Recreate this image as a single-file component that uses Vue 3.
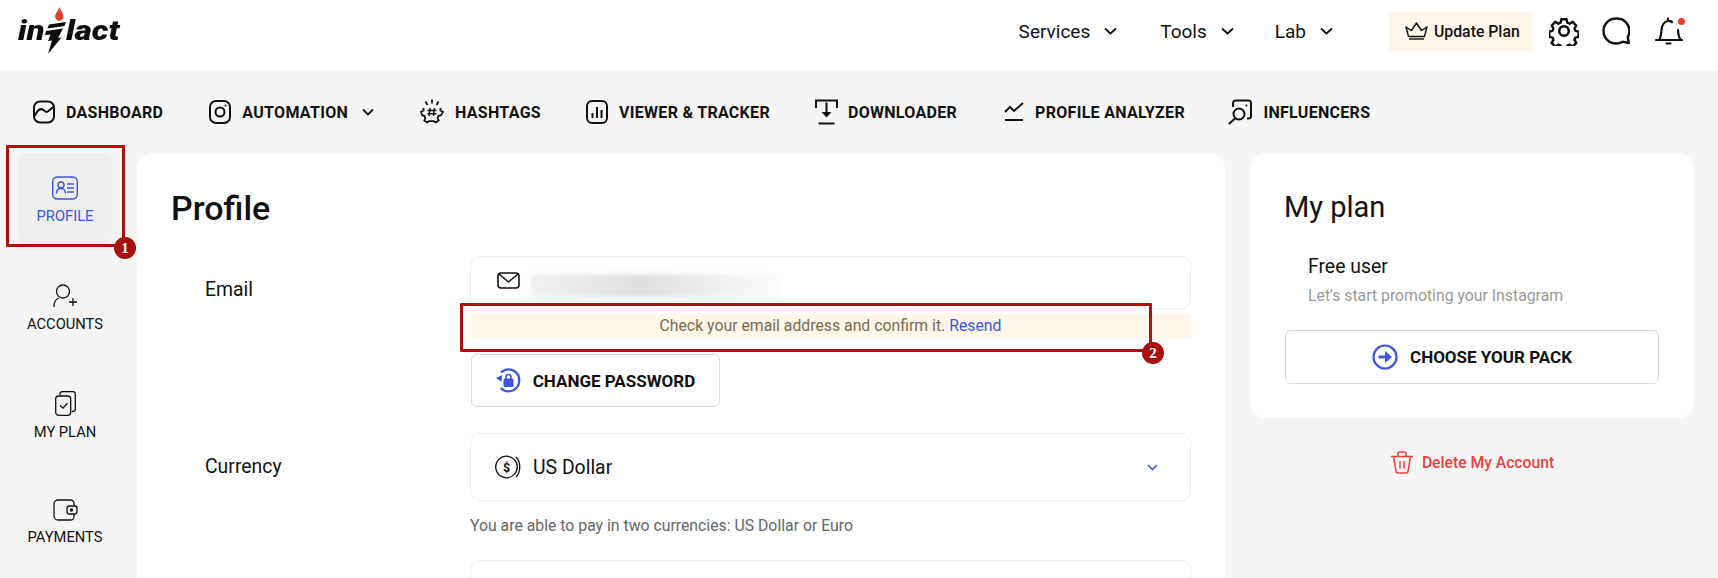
<script setup>
const navItems = [
  { key: 'dash', label: 'DASHBOARD' },
  { key: 'auto', label: 'AUTOMATION', caret: true },
  { key: 'hash', label: 'HASHTAGS' },
  { key: 'view', label: 'VIEWER & TRACKER' },
  { key: 'down', label: 'DOWNLOADER' },
  { key: 'anal', label: 'PROFILE ANALYZER' },
  { key: 'infl', label: 'INFLUENCERS' },
]
const sideItems = [
  { key: 'profile', label: 'PROFILE', active: true },
  { key: 'accounts', label: 'ACCOUNTS' },
  { key: 'plan', label: 'MY PLAN' },
  { key: 'pay', label: 'PAYMENTS' },
]
const topLinks = ['Services', 'Tools', 'Lab']
</script>

<template>
  <div class="page">
    <header class="top">
      <div class="logo">
        <span class="logo-txt lt-in">in</span>
        <svg class="logo-bolt" width="22" height="48" viewBox="0 0 22 48">
          <path d="M14.500 0c1.500 4 4 6.500 4 9.500a4.200 4.200 0 0 1-8.400 0C10.100 6.500 13 4 14.500 0z" fill="#e8412a" />
          <path d="M4 17.500L21 15l-1.500 4L2.500 21.500zM1 24l17-2.500-5 9.500 3.500-.5L3 47l4-13.500-4 .5 2.500-6.500L0 28z" fill="#0d0d0d" />
        </svg>
        <span class="logo-txt lt-lact">lact</span>
      </div>
      <div class="top-right">
        <a v-for="link in topLinks" :key="link" class="top-link">
          {{ link }}
          <svg width="13" height="8" viewBox="0 0 13 8"><path d="M1 1.500l5.500 5 5.500-5" fill="none" stroke="#111" stroke-width="1.800" /></svg>
        </a>
        <button class="update">
          <svg width="23" height="18" viewBox="0 0 23 18" fill="none" stroke="#111" stroke-width="1.400" stroke-linejoin="round">
            <path d="M3.500 14.500L1 5l5.500 3.500L11.500 1l5 7.500L22 5l-2.500 9.500z" /><path d="M4 17h15" />
          </svg>
          Update Plan
        </button>
        <svg class="t-gear" width="30" height="30" viewBox="0 0 30 30" fill="none" stroke="#111" stroke-width="2.600" stroke-linejoin="round">
          <path d="M12.200 2.500h5.600l.8 3.600 2.600 1.100 3.200-2 3.900 4-2 3.100 1 2.600 3.400.8v5.600l-3.400.8-1 2.600 2 3.100-3.900 4-3.200-2-2.600 1.100-.8 3.600h-5.600l-.8-3.600-2.600-1.100-3.200 2-3.900-4 2-3.100-1-2.600-3.400-.8v-5.600l3.400-.8 1-2.600-2-3.100 3.900-4 3.200 2 2.600-1.100z" transform="translate(1 1) scale(.93)" />
          <circle cx="15" cy="15" r="4.800" />
        </svg>
        <svg class="t-chat" width="28" height="28" viewBox="0 0 28 28" fill="none" stroke="#111" stroke-width="2.400" stroke-linejoin="round">
          <path d="M14 1.500a12.500 12.500 0 1 0 0 25c2.500 0 5-.7 6.800-1.800l6 1.300-1-6A12.500 12.500 0 0 0 14 1.500z" />
        </svg>
        <div class="t-bell">
          <svg width="28" height="30" viewBox="0 0 28 30" fill="none" stroke="#111" stroke-width="2.200" stroke-linecap="round">
            <path d="M1 24h26M4 24c2-2 2-6 2.500-10C7 9 9 5.500 13 5c1.500-.2 2.800.2 4 1M23 14c.2 4 .8 8 3 10M13 5V2.500M11.500 27.500h4" />
          </svg>
          <i class="dot"></i>
        </div>
      </div>
    </header>

    <nav class="nav">
      <a v-for="n in navItems" :key="n.key" class="nav-item" :class="'ni-' + n.key">
        <svg v-if="n.key === 'dash'" width="22" height="24" viewBox="0 0 22 24" fill="none" stroke="#111" stroke-width="2">
          <rect x="1" y="1.500" width="20" height="21" rx="6" /><path d="M1.500 16c3-5 5-8 8-6.500s3 4 6 1.500c2-1.500 3-3 5-4" />
        </svg>
        <svg v-else-if="n.key === 'auto'" width="22" height="24" viewBox="0 0 22 24" fill="none" stroke="#111" stroke-width="2">
          <rect x="1" y="1" width="20" height="22" rx="6" /><circle cx="11" cy="12" r="4.500" /><circle cx="16.500" cy="5.500" r="1" fill="#111" stroke="none" />
        </svg>
        <svg v-else-if="n.key === 'hash'" width="24" height="26" viewBox="0 0 24 26" fill="none" stroke="#111" stroke-width="1.800">
          <path d="M12 .5v4M5.500 2.500l2 3.500M18.500 2.500l-2 3.500" />
          <path d="M3.500 9v2.500L1 13l1.200 3.500 2.300.3.800 2.500-1 2.200 2.800 2 2-1.300h4.800l2 1.300 2.800-2-1-2.200.8-2.500 2.300-.3L23 13l-2.500-1.500V9" />
          <path d="M10 9l-1 8M14.500 9l-1 8M7.500 11.500h9M7.500 14.700h9" stroke-width="1.500" />
        </svg>
        <svg v-else-if="n.key === 'view'" width="22" height="24" viewBox="0 0 22 24" fill="none" stroke="#111" stroke-width="2">
          <rect x="1" y="1" width="20" height="22" rx="5" /><path d="M6.500 18v-5M11 18V7M15.500 18v-8" />
        </svg>
        <svg v-else-if="n.key === 'down'" width="23" height="26" viewBox="0 0 23 26" fill="none" stroke="#111" stroke-width="2">
          <path d="M1 9V1.500h21V9" /><path d="M11.500 3.500V14" /><path d="M6.500 13h10l-5 5.500z" fill="#111" stroke="none" /><path d="M3.500 24.500h16" />
        </svg>
        <svg v-else-if="n.key === 'anal'" width="20" height="20" viewBox="0 0 20 20" fill="none" stroke="#111" stroke-width="2">
          <path d="M1 10l5-5 4 4 9-8" /><path d="M1 18h18" />
        </svg>
        <svg v-else width="24" height="26" viewBox="0 0 24 26" fill="none" stroke="#111" stroke-width="2">
          <path d="M5 8V4a2.500 2.500 0 0 1 2.500-2.500h13A2.500 2.500 0 0 1 23 4v13a2.500 2.500 0 0 1-2.500 2.500H19" />
          <circle cx="11" cy="15" r="5.500" /><path d="M7 19.500l-5.500 5" stroke-linecap="round" /><circle cx="18.500" cy="6.500" r="1" fill="#111" stroke="none" />
        </svg>
        <span class="nav-label">{{ n.label }}</span>
        <svg v-if="n.caret" class="caret" width="12" height="8" viewBox="0 0 12 8"><path d="M1 1.500l5 5 5-5" fill="none" stroke="#111" stroke-width="1.800" /></svg>
      </a>
    </nav>

    <div class="body">
      <aside class="side">
        <a v-for="s in sideItems" :key="s.key" class="side-item" :class="{ active: s.active }">
          <svg v-if="s.key === 'profile'" width="26" height="24" viewBox="0 0 26 24" fill="none" stroke="#3a56e0" stroke-width="1.400">
            <rect x=".7" y="1" width="24.600" height="22" rx="4.500" />
            <circle cx="9" cy="9" r="3" /><path d="M4.500 17.500c0-3 1.500-5 4.500-5s4.500 2 4.500 5M15 8h7M15 12h7M15 16h7" />
          </svg>
          <svg v-else-if="s.key === 'accounts'" width="24" height="24" viewBox="0 0 24 24" fill="none" stroke="#111" stroke-width="1.300">
            <circle cx="10" cy="7.500" r="6.500" /><path d="M1 23c0-5 2-8 5-9M20 14v8M16 18h8" />
          </svg>
          <svg v-else-if="s.key === 'plan'" width="21" height="25" viewBox="0 0 21 25" fill="none" stroke="#111" stroke-width="1.300">
            <rect x=".7" y="5" width="15" height="19.300" rx="3" /><path d="M5 4.500V3a2.500 2.500 0 0 1 2.500-2.500H18A2.500 2.500 0 0 1 20.300 3v15a2.500 2.500 0 0 1-2.500 2.500h-1" /><path d="M5 14.500l3 2.700 4.500-5" />
          </svg>
          <svg v-else width="25" height="22" viewBox="0 0 25 22" fill="none" stroke="#111" stroke-width="1.300">
            <path d="M21 7V4.500A3.500 3.500 0 0 0 17.500 1H5A4 4 0 0 0 1 5v12a4 4 0 0 0 4 4h12.500a3.500 3.500 0 0 0 3.500-3.500V15" />
            <rect x="14" y="7" width="10" height="8" rx="2.500" /><circle cx="18.500" cy="11" r="1" fill="#111" />
          </svg>
          <span class="side-label">{{ s.label }}</span>
        </a>
      </aside>

      <main class="main card">
        <h1 class="title">Profile</h1>
        <section class="row row-email">
          <label class="lbl">Email</label>
          <div class="fields">
            <div class="input email">
              <svg width="23" height="17" viewBox="0 0 23 17" fill="none" stroke="#111" stroke-width="1.600" stroke-linejoin="round">
                <rect x="1" y="1" width="21" height="15" rx="3" /><path d="M2 2l9.500 8L21 2" />
              </svg>
              <span class="blur"></span>
            </div>
            <div class="notice">Check your email address and confirm it. <a>Resend</a></div>
            <button class="btn pw">
              <svg width="25" height="25" viewBox="0 0 25 25" fill="none">
                <path d="M5 4.500A10.800 10.800 0 0 1 23.300 12.500a10.800 10.800 0 0 1-18.500 7.500" stroke="#3a56e0" stroke-width="2.200" />
                <path d="M0 9.500L6.500 7.500 5 14z" fill="#3a56e0" transform="rotate(-8 3 10)" />
                <rect x="7.500" y="10.500" width="10" height="8.500" rx="1.500" fill="#3a56e0" />
                <path d="M10 11V9a2.500 2.500 0 0 1 5 0v2" stroke="#3a56e0" stroke-width="1.600" />
              </svg>
              CHANGE PASSWORD
            </button>
          </div>
        </section>
        <section class="row row-cur">
          <label class="lbl">Currency</label>
          <div class="fields">
            <div class="input select">
              <svg width="28" height="24" viewBox="0 0 28 24" fill="none" stroke="#111" stroke-width="1.300">
                <circle cx="11.500" cy="12" r="10.800" /><path d="M21 2c5 5 5 15 0 20" />
                <text x="11.500" y="16.500" text-anchor="middle" font-size="12.500" font-weight="700" fill="#111" stroke="none" font-family="Roboto, sans-serif">$</text>
              </svg>
              <span class="sel-val">US Dollar</span>
              <svg class="sel-caret" width="11" height="7" viewBox="0 0 11 7"><path d="M1 1l4.500 4.500L10 1" fill="none" stroke="#3a56e0" stroke-width="1.600" /></svg>
            </div>
            <p class="help">You are able to pay in two currencies: US Dollar or Euro</p>
            <div class="input next"></div>
          </div>
        </section>
      </main>

      <aside class="right">
        <div class="card plan">
          <h2 class="plan-title">My plan</h2>
          <div class="plan-name">Free user</div>
          <div class="plan-sub">Let's start promoting your Instagram</div>
          <button class="btn pack">
            <svg width="26" height="26" viewBox="0 0 26 26" fill="none">
              <circle cx="13" cy="13" r="11.500" stroke="#3a56e0" stroke-width="2.200" />
              <path d="M6.500 11.500H13V7l7 6-7 6v-4.500H6.500z" fill="#3a56e0" />
            </svg>
            CHOOSE YOUR PACK
          </button>
        </div>
        <a class="del">
          <svg width="24" height="23" viewBox="0 0 24 23" fill="none" stroke="#f03e3e" stroke-width="1.500" stroke-linejoin="round">
            <path d="M1 5.500h22M3.500 5.500L6 20a2 2 0 0 0 2 2h8a2 2 0 0 0 2-2l2.500-14.500M8 5.500V3a2 2 0 0 1 2-2h4a2 2 0 0 1 2 2v2.500M10 10v7.500M14 10v7.500" />
          </svg>
          Delete My Account
        </a>
      </aside>
    </div>

    <div class="mark mark-1"><i class="badge">1</i></div>
    <div class="mark mark-2"><i class="badge">2</i></div>
  </div>
</template>

<style>
html, body { margin: 0; background: #f5f5f5; }
</style>

<style scoped>
.page { position: relative; width: 1718px; height: 578px; overflow: hidden; background: #f5f5f5; font-family: Roboto, sans-serif; color: #111; }
a { color: inherit; text-decoration: none; }
.top { height: 71px; background: #fff; display: flex; align-items: center; justify-content: space-between; padding: 0 35px 9px 18px; box-sizing: border-box; }
.logo { display: flex; align-items: center; height: 48px; width: 105px; color: #0d0d0d; }
.logo-txt { font-weight: 900; font-style: italic; font-size: 28px; line-height: 1; transform-origin: left center; display: inline-block; }
.lt-in { width: 27px; transform: scaleX(1.16); }
.lt-lact { width: 58px; transform: scaleX(1.18); margin-left: -1px; }
.logo-bolt { flex: none; margin: 0; }
.top-right { display: flex; align-items: center; }
.top-link { display: flex; align-items: center; gap: 14px; font-size: 19px; margin-right: 41px; }
.top-link:first-child { margin-right: 43px; }
.top-link:last-of-type { margin-right: 56px; }
.update { display: flex; align-items: center; gap: 6px; height: 39px; width: 144px; padding: 0 0 0 16px; box-sizing: border-box; background: #fff7ea; border: 0; font: 500 15.800px Roboto, sans-serif; color: #111; margin-right: 16px; border-radius: 2px; white-space: nowrap; }
.t-gear { margin-right: 23px; }
.t-chat { margin-right: 25px; }
.t-bell { position: relative; width: 28px; height: 30px; }
.dot { position: absolute; right: -2px; top: 2px; width: 7px; height: 7px; border-radius: 50%; background: #ee3b30; }

.nav { height: 82px; display: flex; align-items: center; gap: 45px; padding-left: 33px; box-sizing: border-box; }
.nav-item { display: flex; align-items: center; gap: 11px; }
.nav-label { font-weight: 700; font-size: 16px; letter-spacing: .3px; white-space: nowrap; }
.caret { margin: 0 1px 0 3px; }
.ni-auto { margin-left: 1px; }
.ni-down { gap: 10px; }
.ni-anal { margin-left: 2px; }
.ni-infl { margin-left: -1.500px; }

.body { display: flex; align-items: flex-start; }
.side { width: 137px; flex: none; display: flex; flex-direction: column; align-items: center; box-sizing: border-box; }
.side-item { width: 94px; height: 90px; margin-bottom: 17.500px; display: flex; flex-direction: column; align-items: center; gap: 8px; padding-top: 23px; box-sizing: border-box; border-radius: 8px; margin-left: -7px; }
.side-item.active { background: #eeeeee; color: #3a56e0; }
.side-label { font-size: 14.700px; white-space: nowrap; line-height: 16px; }
.card { background: #fff; border-radius: 16px; }
.main { width: 1088px; height: 500px; flex: none; box-sizing: border-box; padding: 33px 35px 0 34px; }
.title { margin: 0; font-size: 34px; font-weight: 500; line-height: 44px; }
.row { display: flex; }
.row-email { margin-top: 26px; }
.row-cur { margin-top: 26px; }
.lbl { width: 299px; flex: none; font-size: 19.400px; line-height: 22px; padding: 25px 0 0 34px; box-sizing: border-box; margin-top: -2px; }
.fields { width: 721px; flex: none; }
.input { border: 1px solid #eceef2; border-radius: 10px; display: flex; align-items: center; box-sizing: border-box; background: #fff; }
.email { height: 53px; padding: 0 0 0 26px; gap: 10px; }
.email svg { position: relative; top: -2px; }
.blur { width: 249px; height: 23px; background: linear-gradient(90deg, #f0f0f0 0, #dfdfdf 45%, #eeeeee 75%, #fcfcfc 100%); filter: blur(2px); position: relative; top: 3px; }
.notice { margin-top: 5px; height: 24px; line-height: 24px; background: #fff7ea; text-align: center; font-size: 15.800px; color: #7a6a4f; }
.notice a { color: #3a56e0; }
.btn { display: flex; align-items: center; justify-content: center; background: #fff; border: 1.500px solid #d5d8e5; border-radius: 6px; font: 700 17px Roboto, sans-serif; color: #111; box-sizing: border-box; }
.pw { margin-top: 16px; margin-left: 1px; width: 249px; height: 53px; gap: 12px; }
.select { height: 68px; padding: 0 32px 0 24px; }
.sel-val { font-size: 19.400px; margin-left: 10px; }
.sel-caret { margin-left: auto; }
.help { margin: 15px 0 0; font-size: 15.800px; line-height: 20px; color: #666; }
.next { height: 60px; margin-top: 24px; }

.right { margin-left: 25px; width: 444px; flex: none; }
.plan { height: 265px; padding: 34px 35px 0; box-sizing: border-box; }
.plan-title { margin: 0 0 0 -1px; font-size: 29px; font-weight: 400; line-height: 40px; }
.plan-name { margin: 28px 0 0 23px; font-size: 19.400px; line-height: 24px; }
.plan-sub { margin: 7px 0 0 23px; font-size: 15.800px; line-height: 20px; color: #999; }
.pack { margin-top: 24px; width: 374px; height: 54px; gap: 12px; }
.del { display: flex; align-items: center; justify-content: center; gap: 8px; color: #f03e3e; font-size: 15.700px; font-weight: 500; margin-top: 33px; }

.mark { position: absolute; border: 3px solid #b30f0f; box-sizing: border-box; border-radius: 1px; }
.mark-1 { left: 6px; top: 145px; width: 119px; height: 102px; }
.mark-2 { left: 460px; top: 303px; width: 692px; height: 49px; }
.mark-1 .badge { right: -14px; bottom: -15px; }
.badge { position: absolute; right: -15px; bottom: -15px; width: 22px; height: 22px; border-radius: 50%; background: #a80f0f; color: #fff; font: 700 15px/22px "Liberation Serif", serif; text-align: center; }
</style>
